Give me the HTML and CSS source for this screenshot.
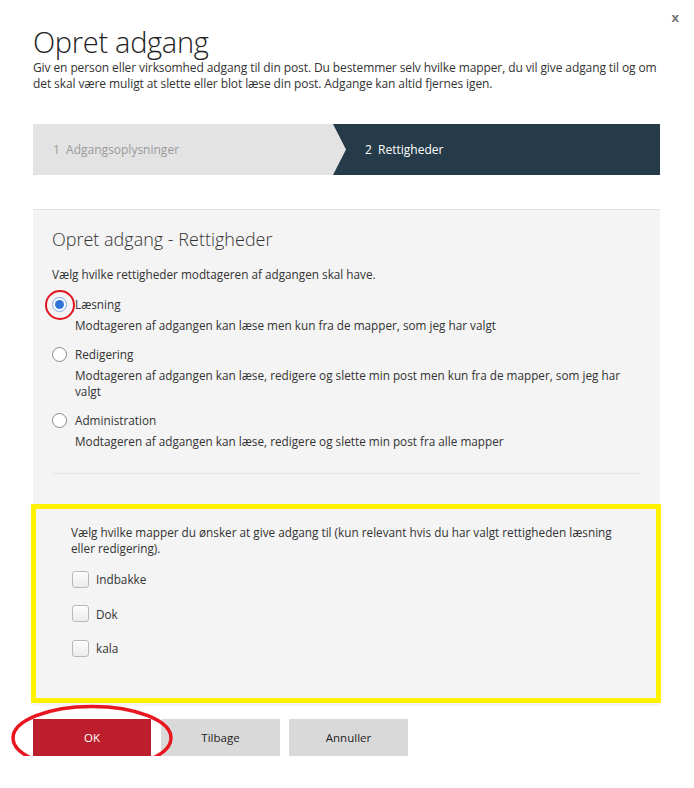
FILE: index.html
```html
<!DOCTYPE html>
<html lang="da">
<head>
<meta charset="utf-8">
<title>Opret adgang</title>
<link rel="stylesheet" href="styles.css">
</head>
<body>
<div class="dialog">
  <span class="close">x</span>
  <h1 class="title">Opret adgang</h1>
  <p class="intro">Giv en person eller virksomhed adgang til din post. Du bestemmer selv hvilke mapper, du vil give adgang til og om det skal være muligt at slette eller blot læse din post. Adgange kan altid fjernes igen.</p>

  <div class="stepper">
    <div class="step step-done">1&nbsp;&nbsp;Adgangsoplysninger</div>
    <div class="step step-active">2&nbsp;&nbsp;Rettigheder</div>
  </div>

  <div class="panel">
    <div class="rights">
      <h2 class="panel-title">Opret adgang - Rettigheder</h2>
      <p class="lead">Vælg hvilke rettigheder modtageren af adgangen skal have.</p>

      <div class="option">
        <span class="radio checked"><span class="ring-mark"></span></span>
        <div class="option-text">
          <div class="option-label">Læsning</div>
          <div class="option-desc">Modtageren af adgangen kan læse men kun fra de mapper, som jeg har valgt</div>
        </div>
      </div>
      <div class="option">
        <span class="radio"></span>
        <div class="option-text">
          <div class="option-label">Redigering</div>
          <div class="option-desc">Modtageren af adgangen kan læse, redigere og slette min post men kun fra de mapper, som jeg har valgt</div>
        </div>
      </div>
      <div class="option">
        <span class="radio"></span>
        <div class="option-text">
          <div class="option-label">Administration</div>
          <div class="option-desc">Modtageren af adgangen kan læse, redigere og slette min post fra alle mapper</div>
        </div>
      </div>
      <div class="divider"></div>
    </div>

    <div class="folders">
      <p class="folders-lead">Vælg hvilke mapper du ønsker at give adgang til (kun relevant hvis du har valgt rettigheden læsning eller redigering).</p>
      <div class="check-row"><span class="checkbox"></span><span>Indbakke</span></div>
      <div class="check-row"><span class="checkbox"></span><span>Dok</span></div>
      <div class="check-row"><span class="checkbox"></span><span>kala</span></div>
    </div>
  </div>

  <div class="actions">
    <button class="btn btn-primary">OK</button>
    <button class="btn">Tilbage</button>
    <button class="btn btn-cancel">Annuller</button>
    <svg class="ok-mark" width="166" height="70" viewBox="0 0 166 70"><ellipse cx="83" cy="35" rx="79" ry="31.5" fill="none" stroke="#e8161f" stroke-width="3.5"/></svg>
  </div>
</div>
</body>
</html>
```

FILE: styles.css
```css
* { box-sizing: border-box; }

html, body {
  margin: 0;
  padding: 0;
  background: #ffffff;
}

body {
  font-family: "Open Sans", "Noto Sans", sans-serif;
  color: #333333;
}

.dialog {
  position: relative;
  width: 694px;
  padding: 24px 34px 0 33px;
}

.close {
  position: absolute;
  top: 7px;
  right: 15px;
  font-size: 13px;
  font-weight: 700;
  color: #7a7a7a;
  line-height: 20px;
}

.title {
  margin: 0;
  font-size: 29px;
  font-weight: 300;
  line-height: 36px;
  color: #222;
  letter-spacing: -0.3px;
}

.intro {
  margin: 0;
  font-size: 12px;
  letter-spacing: -0.1px;
  line-height: 16px;
  color: #333;
}

.stepper {
  display: flex;
  margin-top: 32px;
  height: 51px;
  background: #263b4a;
}

.step {
  display: flex;
  align-items: center;
  font-size: 12px;
}

.step-done {
  flex: 0 0 313px;
  padding-left: 20px;
  background: #e3e3e3;
  color: #9a9a9a;
  clip-path: polygon(0 0, 300px 0, 313px 50%, 300px 100%, 0 100%);
}

.step-active {
  padding-left: 19px;
  color: #ffffff;
}

.panel {
  margin-top: 34px;
  background: #f4f4f4;
  border-top: 1px solid #e2e2e2;
  padding-bottom: 3px;
}

.rights {
  padding: 0 19px;
}

.panel-title {
  margin: 0;
  padding-top: 17px;
  font-size: 18px;
  font-weight: 300;
  line-height: 24px;
  color: #333;
}

.lead {
  margin: 15px 0 0;
  font-size: 11.75px;
  line-height: 16px;
}

.option {
  display: flex;
  align-items: flex-start;
  margin-top: 14px;
}

.option + .option {
  margin-top: 13px;
}

.radio {
  position: relative;
  flex: 0 0 15px;
  width: 15px;
  height: 15px;
  margin-top: 1px;
  margin-right: 8px;
  border: 1px solid #8a8a8a;
  border-radius: 50%;
  background: #ffffff;
}

.radio.checked {
  border: 1px solid #7aa7e6;
  background: #ffffff;
}

.radio.checked::before {
  content: "";
  position: absolute;
  left: 2px;
  top: 2px;
  width: 9px;
  height: 9px;
  border-radius: 50%;
  background: #2f74d6;
}

.ring-mark {
  position: absolute;
  left: -8.5px;
  top: -8.5px;
  width: 30px;
  height: 30px;
  border: 2.5px solid #e0151f;
  border-radius: 50%;
}

.option-text {
  flex: 1;
}

.option-label {
  font-size: 11.75px;
  line-height: 16px;
}

.option-desc {
  margin-top: 5px;
  font-size: 11.75px;
  line-height: 16px;
}

.divider {
  margin-top: 24px;
  height: 1px;
  background: #e6e6e6;
}

.folders {
  margin: 30px -1px 0 -2px;
  border: 5px solid #fff200;
  padding: 15px 25px 41px 35px;
}

.folders-lead {
  margin: 0;
  font-size: 11.75px;
  line-height: 16px;
}

.check-row {
  display: flex;
  align-items: center;
  font-size: 11.75px;
  line-height: 18px;
}

.check-row:first-of-type {
  margin-top: 14px;
}

.check-row + .check-row {
  margin-top: 16.5px;
}

.checkbox {
  flex: 0 0 17px;
  width: 17px;
  height: 17px;
  margin-left: 1px;
  margin-right: 7px;
  border: 1px solid #b9b9b9;
  border-radius: 3px;
  background: linear-gradient(#fdfdfd, #ececec);
  box-shadow: inset 0 1px 0 #fff;
}

.actions {
  position: relative;
  display: flex;
  gap: 9px;
  margin-top: 13px;
}

.btn {
  width: 119px;
  height: 37px;
  border: 0;
  padding: 0;
  background: #d9d9d9;
  font-family: "Open Sans", "Noto Sans", sans-serif;
  font-size: 11.5px;
  color: #222;
}

.btn-primary {
  width: 118px;
  margin-right: 1px;
  background: #bc1e2d;
  color: #ffffff;
}

.ok-mark {
  position: absolute;
  left: -24px;
  top: -16.5px;
  pointer-events: none;
}
```
